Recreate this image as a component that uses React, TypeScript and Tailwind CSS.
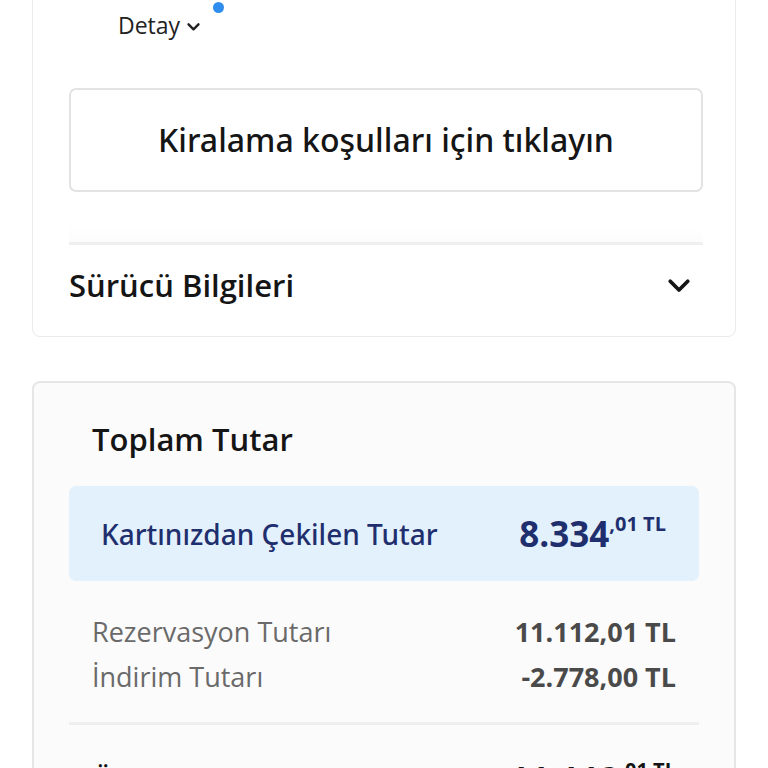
import React from "react";

const Chevron = ({ className, w = 3 }: { className?: string; w?: number }) => (
  <svg viewBox="0 0 24 24" className={className} fill="none" stroke="currentColor" strokeWidth={w} strokeLinecap="round" strokeLinejoin="round">
    <path d="M5 9l7 7 7-7" />
  </svg>
);

const medium = { fontFamily: '"Noto Sans", "Open Sans", sans-serif', fontWeight: 500 };

export default function App() {
  return (
    <div
      className="w-[768px] h-[768px] overflow-hidden bg-white"
      style={{ fontFamily: '"Open Sans", "Noto Sans", sans-serif' }}
    >
      {/* Card 1 */}
      <div className="mx-[32px] -mt-[24px] border border-[#ebebeb] rounded-b-[8px] bg-white">
        <div className="h-[33px] flex items-end pl-[180px]">
          <div className="w-[11px] h-[11px] rounded-full bg-[#2f8ded] mb-[-3px]" />
        </div>
        <div className="flex items-center pl-[85px] h-[30px] text-[23px] text-[#222] leading-[30px]">
          <span>Detay</span>
          <Chevron className="w-[17px] h-[17px] ml-[5px] mt-[2px] text-[#222]" w={3.4} />
        </div>
        <div className="pl-[36px] pr-[32px] pt-[48px]">
          <div className="h-[104px] border-2 border-[#e3e3e3] rounded-[7px] flex items-center justify-center text-[32px] text-[#151515] font-[family-name:'Noto_Sans','Open_Sans',sans-serif] font-medium">
            Kiralama koşulları için tıklayın
          </div>
          <div className="h-[32px]" />
          <div className="h-[18px] bg-gradient-to-b from-white to-[#fcfcfc]" />
          <div className="h-[3px] bg-[#efefef]" />
          <div className="flex items-center justify-between pt-[20px] pb-[31px]">
            <span className="text-[31px] leading-[40px] font-semibold text-[#151515]">Sürücü Bilgileri</span>
            <Chevron className="w-[30px] h-[30px] mr-[9px] text-[#151515]" />
          </div>
        </div>
      </div>

      {/* Card 2 */}
      <div className="mx-[32px] mt-[44px] border-2 border-[#e6e6e6] rounded-[8px] bg-[#fbfbfb] px-[35px] pb-[40px]">
        <div className="pl-[23px] pt-[36px] pb-[27px] text-[31px] leading-[40px] font-semibold text-[#151515]">
          Toplam Tutar
        </div>
        <div className="h-[95px] rounded-[7px] bg-[#e3f1fd] flex items-center justify-between pl-[32px] pr-[33px]">
          <span className="text-[28px] font-medium text-[#1f2f6e] font-[family-name:'Noto_Sans','Open_Sans',sans-serif]">Kartınızdan Çekilen Tutar</span>
          <span className="flex items-start text-[#1f2f6e] font-bold">
            <span className="text-[35px] leading-[46px]">8.334</span>
            <span className="text-[20px] leading-[22px] mt-[2px]">,01 TL</span>
          </span>
        </div>
        <div className="px-[23px] pt-[31px] pb-[25px] flex flex-col gap-[5px]">
          <div className="flex justify-between items-center h-[40px]">
            <span className="text-[27px] text-[#6a6a6a]">Rezervasyon Tutarı</span>
            <span className="text-[27px] font-bold text-[#4a4a4a]">11.112,01 TL</span>
          </div>
          <div className="flex justify-between items-center h-[40px]">
            <span className="text-[27px] text-[#6a6a6a]">İndirim Tutarı</span>
            <span className="text-[27px] font-bold text-[#4a4a4a]">-2.778,00 TL</span>
          </div>
        </div>
        <div className="h-[3px] bg-[#efefef]" />
        <div className="px-[23px] pt-[32px] flex justify-between items-center">
          <span className="text-[28px] font-semibold text-[#151515]">Ödenecek Tutar</span>
          <span className="flex items-start text-[#151515] font-bold">
            <span className="text-[35px] leading-[46px]">11.112</span>
            <span className="text-[20px] leading-[22px] mt-[2px]">,01 TL</span>
          </span>
        </div>
      </div>
    </div>
  );
}
